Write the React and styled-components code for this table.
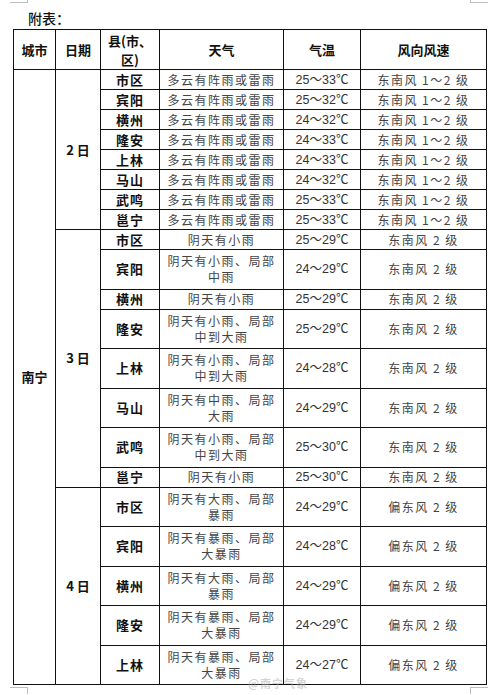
import React from 'react';
import styled, {createGlobalStyle} from 'styled-components';

const GlobalStyle = createGlobalStyle`
  html, body {
    margin: 0;
    padding: 0;
    background: #fff;
  }
  body {
    font-family: "Liberation Sans", "Noto Sans CJK SC", sans-serif;
    color: #222;
  }
`;

const Page = styled.div`
  position: relative;
  width: 500px;
  height: 695px;
  overflow: hidden;
  background: #fff;
`;

const CornerMark = styled.div`
  position: absolute;
  width: 17px;
  height: 6px;
  border-color: #bdbdbd;
  border-style: solid;
  border-width: 0;
  ${props => props.top ? 'top: -4px; border-bottom-width: 1px;' : 'top: 687px; border-top-width: 1px;'}
  ${props => props.left ? 'left: 10px; border-right-width: 1px;' : 'left: 470px; border-left-width: 1px;'}
`;

const Title = styled.div`
  padding: 10px 0 0 28px;
  height: 19px;
  font-family: "Noto Sans CJK SC", sans-serif;
  font-size: 14px;
  font-weight: 500;
  line-height: 17px;
  color: #111;
`;

const Table = styled.table`
  margin-left: 13px;
  width: 473px;
  table-layout: fixed;
  border-collapse: collapse;
  border: 1px solid #111;
`;

const Row = styled.tr`
  height: ${props => props.h}px;
`;

const HeadCell = styled.th`
  border: 1px solid #111;
  padding: 0;
  font-family: "Noto Sans CJK SC", sans-serif;
  font-size: 13px;
  font-weight: 700;
  line-height: 19px;
  color: #111;
  text-align: center;
  vertical-align: middle;
  white-space: pre-line;
`;

const BoldCell = styled.td`
  border: 1px solid #111;
  padding: 0;
  font-family: "Noto Sans CJK SC", sans-serif;
  font-size: 13px;
  font-weight: 700;
  line-height: 16px;
  color: #111;
  text-align: center;
  vertical-align: middle;
  letter-spacing: ${props => props.spread ? '1px' : '0'};
`;

const TextCell = styled.td`
  border: 1px solid #111;
  padding: 0;
  font-family: "Noto Sans CJK SC", sans-serif;
  font-size: 12px;
  font-weight: 400;
  line-height: 16px;
  color: #444;
  letter-spacing: 1.5px;
  text-align: center;
  vertical-align: middle;
  white-space: pre-line;
`;

const TempCell = styled.td`
  border: 1px solid #111;
  padding: 0;
  font-family: "Liberation Sans", "Noto Sans CJK SC", sans-serif;
  font-size: 12.5px;
  line-height: 16px;
  color: #333;
  text-align: center;
  vertical-align: middle;
`;

const Watermark = styled.div`
  position: absolute;
  left: 248px;
  top: 677px;
  font-family: "Noto Sans CJK SC", sans-serif;
  font-size: 11px;
  font-weight: 700;
  line-height: 13px;
  color: rgba(170, 170, 170, 0.5);
  letter-spacing: 1px;
`;

const days = [
  {
    day: '2 日',
    wind: '东南风 1～2 级',
    rows: [
      ['市区', '多云有阵雨或雷雨', '25～33℃'],
      ['宾阳', '多云有阵雨或雷雨', '25～32℃'],
      ['横州', '多云有阵雨或雷雨', '24～32℃'],
      ['隆安', '多云有阵雨或雷雨', '24～33℃'],
      ['上林', '多云有阵雨或雷雨', '24～33℃'],
      ['马山', '多云有阵雨或雷雨', '24～32℃'],
      ['武鸣', '多云有阵雨或雷雨', '25～33℃'],
      ['邕宁', '多云有阵雨或雷雨', '25～33℃'],
    ],
  },
  {
    day: '3 日',
    wind: '东南风 2 级',
    rows: [
      ['市区', '阴天有小雨', '25～29℃'],
      ['宾阳', '阴天有小雨、局部\n中雨', '24～29℃'],
      ['横州', '阴天有小雨', '25～29℃'],
      ['隆安', '阴天有小雨、局部\n中到大雨', '25～29℃'],
      ['上林', '阴天有小雨、局部\n中到大雨', '24～28℃'],
      ['马山', '阴天有中雨、局部\n大雨', '24～29℃'],
      ['武鸣', '阴天有小雨、局部\n中到大雨', '25～30℃'],
      ['邕宁', '阴天有小雨', '25～30℃'],
    ],
  },
  {
    day: '4 日',
    wind: '偏东风 2 级',
    rows: [
      ['市区', '阴天有大雨、局部\n暴雨', '24～29℃'],
      ['宾阳', '阴天有暴雨、局部\n大暴雨', '24～28℃'],
      ['横州', '阴天有大雨、局部\n暴雨', '24～29℃'],
      ['隆安', '阴天有暴雨、局部\n大暴雨', '24～29℃'],
      ['上林', '阴天有暴雨、局部\n大暴雨', '24～27℃'],
    ],
  },
];

const totalRows = days.reduce((sum, d) => sum + d.rows.length, 0);

export default function App() {
  return (
    <Page>
      <GlobalStyle/>
      <CornerMark top left/>
      <CornerMark top/>
      <CornerMark left/>
      <CornerMark/>

      <Title>附表：</Title>

      <Table>
        <colgroup>
          <col style={{width: 42}}/>
          <col style={{width: 45}}/>
          <col style={{width: 59}}/>
          <col style={{width: 124}}/>
          <col style={{width: 77}}/>
          <col style={{width: 126}}/>
        </colgroup>
        <thead>
          <Row h={40}>
            <HeadCell>城市</HeadCell>
            <HeadCell>日期</HeadCell>
            <HeadCell>{'县(市、\n区)'}</HeadCell>
            <HeadCell>天气</HeadCell>
            <HeadCell>气温</HeadCell>
            <HeadCell>风向风速</HeadCell>
          </Row>
        </thead>
        <tbody>
          {days.map((d, di) => d.rows.map((r, ri) => (
            <Row key={d.day + r[0]} h={r[1].includes('\n') ? 39.5 : 20}>
              {di === 0 && ri === 0 &&
              <BoldCell rowSpan={totalRows}>南宁</BoldCell>
              }
              {ri === 0 &&
              <BoldCell rowSpan={d.rows.length}>{d.day}</BoldCell>
              }
              <BoldCell spread>{r[0]}</BoldCell>
              <TextCell>{r[1]}</TextCell>
              <TempCell>{r[2]}</TempCell>
              <TextCell>{d.wind}</TextCell>
            </Row>
          )))}
        </tbody>
      </Table>

      <Watermark>@南宁气象</Watermark>
    </Page>
  );
}
